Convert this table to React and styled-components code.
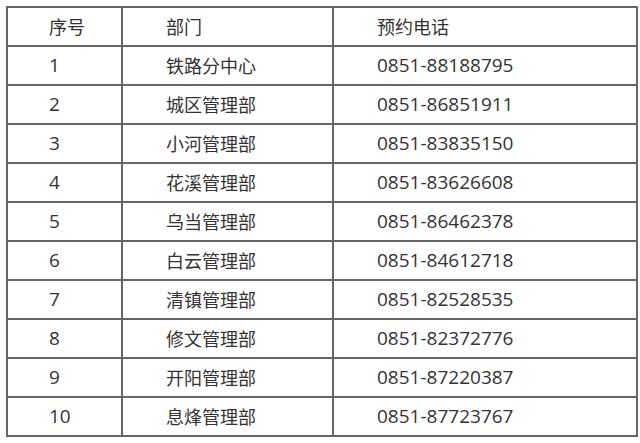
import React from "react";
import styled, { createGlobalStyle } from "styled-components";

const GlobalStyle = createGlobalStyle`
  html, body {
    margin: 0;
    padding: 0;
    background: #fff;
  }
  body {
    font-family: "Open Sans", "Noto Sans CJK SC", sans-serif;
    color: #333;
  }
`;

const Page = styled.div`
  padding: 6px 0 0 6px;
`;

const Table = styled.div`
  width: 628px;
  border: 2px solid #666;
`;

const Row = styled.div`
  display: grid;
  grid-template-columns: 113px 211px 304px;
  height: 37px;
  & + & {
    border-top: 2px solid #666;
  }
`;

const Cell = styled.div`
  display: flex;
  align-items: center;
  padding-left: ${(p) => p.$pad}px;
  font-size: ${(p) => (p.$num ? 19 : 18)}px;
  line-height: 1;
  white-space: nowrap;
  & + & {
    border-left: 2px solid #666;
  }
`;

const rows = [
  ["1", "铁路分中心", "0851-88188795"],
  ["2", "城区管理部", "0851-86851911"],
  ["3", "小河管理部", "0851-83835150"],
  ["4", "花溪管理部", "0851-83626608"],
  ["5", "乌当管理部", "0851-86462378"],
  ["6", "白云管理部", "0851-84612718"],
  ["7", "清镇管理部", "0851-82528535"],
  ["8", "修文管理部", "0851-82372776"],
  ["9", "开阳管理部", "0851-87220387"],
  ["10", "息烽管理部", "0851-87723767"],
];

const pads = [41, 43, 43];

export default function App() {
  return (
    <>
      <GlobalStyle />
      <Page>
        <Table>
          <Row>
            {["序号", "部门", "预约电话"].map((h, i) => (
              <Cell key={h} $pad={pads[i]}>
                {h}
              </Cell>
            ))}
          </Row>
          {rows.map((r) => (
            <Row key={r[0]}>
              {r.map((v, i) => (
                <Cell key={i} $pad={pads[i]} $num={i !== 1}>
                  {v}
                </Cell>
              ))}
            </Row>
          ))}
        </Table>
      </Page>
    </>
  );
}
